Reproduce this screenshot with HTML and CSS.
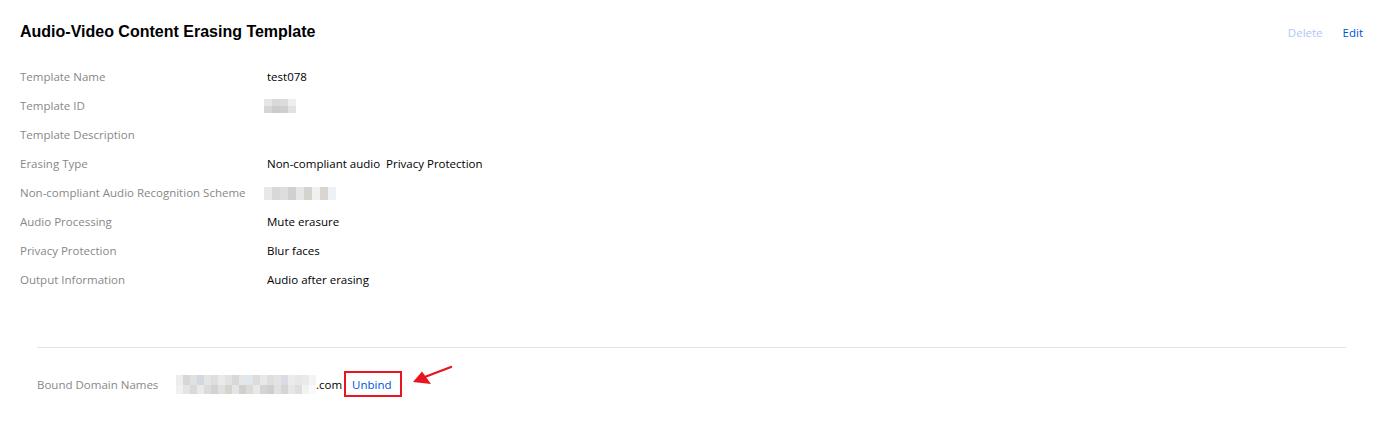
FILE: index.html
```html
<!DOCTYPE html>
<html lang="en">
<head>
<meta charset="utf-8">
<title>Audio-Video Content Erasing Template</title>
<link rel="stylesheet" href="styles.css">
</head>
<body>
<div class="page">
  <div class="header">
    <h2 class="title">Audio-Video Content Erasing Template</h2>
    <div class="actions">
      <a class="link disabled">Delete</a>
      <a class="link">Edit</a>
    </div>
  </div>
  <div class="details">
    <div class="row"><div class="label">Template Name</div><div class="value">test078</div></div>
    <div class="row"><div class="label">Template ID</div><div class="value"><span class="mosaic mosaic-id"></span></div></div>
    <div class="row"><div class="label">Template Description</div><div class="value"></div></div>
    <div class="row"><div class="label">Erasing Type</div><div class="value">Non-compliant audio&nbsp; Privacy Protection</div></div>
    <div class="row"><div class="label">Non-compliant Audio Recognition Scheme</div><div class="value"><span class="mosaic mosaic-scheme"></span></div></div>
    <div class="row"><div class="label">Audio Processing</div><div class="value">Mute erasure</div></div>
    <div class="row"><div class="label">Privacy Protection</div><div class="value">Blur faces</div></div>
    <div class="row"><div class="label">Output Information</div><div class="value">Audio after erasing</div></div>
  </div>
  <div class="bound">
    <div class="bound-row">
      <div class="bound-label">Bound Domain Names</div>
      <div class="bound-value">
        <span class="mosaic mosaic-domain"></span><span class="domain-tail">.com</span>
        <span class="unbind-box"><a class="link">Unbind</a></span>
        <svg class="arrow" width="44" height="24" viewBox="0 0 44 24">
          <path d="M15 12.5 L40 3" stroke="#e8141f" stroke-width="2.4" stroke-linecap="round" fill="none"/>
          <path d="M2 18 L11 7.5 L15 13 L20 20 Z" fill="#e8141f"/>
        </svg>
      </div>
    </div>
  </div>
</div>
</body>
</html>
```
FILE: styles.css
```css
* { box-sizing: border-box; }
body {
  margin: 0;
  background: #fff;
  font-family: "Open Sans", "Noto Sans", "Liberation Sans", sans-serif;
  font-size: 11.5px;
  color: #000;
}
.page {
  padding: 20px 20px 0 20px;
}
.header {
  display: flex;
  justify-content: space-between;
  align-items: center;
  height: 24px;
}
.title {
  margin: 0;
  font-family: "Liberation Sans", Arial, sans-serif;
  font-weight: bold;
  font-size: 16px;
  color: #000;
  line-height: 24px;
}
.actions {
  display: flex;
  gap: 20px;
}
.link {
  color: #0052d9;
  cursor: pointer;
}
.link.disabled {
  color: #b0c6f7;
}
.details {
  margin-top: 18px;
}
.row {
  display: flex;
  align-items: center;
  height: 29px;
}
.label {
  width: 247px;
  color: #888;
}
.value {
  color: #000;
}
.mosaic {
  display: inline-block;
  vertical-align: middle;
}
.mosaic-id {
  width: 32px;
  height: 14px;
  margin-left: -3px;
  background:
    linear-gradient(90deg, #e6e6e6 0 8px, #d9d9d9 8px 16px, #dcdcdc 16px 24px, #eeeeee 24px 32px) top/100% 7px no-repeat,
    linear-gradient(90deg, #d6d6d6 0 8px, #cccccc 8px 16px, #cfcfcf 16px 24px, #e2e2e2 24px 32px) bottom/100% 7px no-repeat;
}
.mosaic-scheme {
  width: 72px;
  height: 13px;
  margin-left: -3px;
  background: linear-gradient(90deg, #e8e8e8 0 8px, #d8d8d8 8px 16px, #dddddd 16px 24px, #d2cfcc 24px 32px, #e6e6e6 32px 40px, #d6d2ce 40px 48px, #f0f0f0 48px 56px, #d9d5d0 56px 64px, #eef2f8 64px 72px);
}
.bound {
  margin: 53px 17px 0 17px;
  border-top: 1px solid #e5e5e5;
  padding-top: 23px;
}
.bound-row {
  display: flex;
  align-items: center;
  height: 26px;
}
.bound-label {
  width: 139px;
  color: #888;
}
.bound-value {
  display: flex;
  align-items: center;
}
.mosaic-domain {
  width: 140px;
  height: 19px;
  background:
    linear-gradient(90deg, #ededed 0 7px, #d6d6d6 7px 14px, #e0e0e0 14px 21px, #d3d8df 21px 28px, #e4e4e4 28px 35px, #dedede 35px 42px, #eaeaea 42px 49px, #e2e2e2 49px 56px, #d8d8d8 56px 63px, #e6e6e6 63px 70px, #e0e6ee 70px 77px, #dcdcdc 77px 84px, #e8e8e8 84px 91px, #dedede 91px 98px, #e3e3e3 98px 105px, #d9dde3 105px 112px, #ececec 112px 119px, #e7e7e7 119px 126px, #eaeaea 126px 133px, #f4f4f4 133px 140px) top/100% 10px no-repeat,
    linear-gradient(90deg, #f0f0f0 0 7px, #e4e4e4 7px 14px, #d9d9d9 14px 21px, #e9e9e9 21px 28px, #dcdcdc 28px 35px, #d2d2d2 35px 42px, #e0e0e0 42px 49px, #d7d3cf 49px 56px, #e5e5e5 56px 63px, #d0d0d0 63px 70px, #dedad6 70px 77px, #e8e8e8 77px 84px, #d4d4d4 84px 91px, #cfcfcf 91px 98px, #e1e1e1 98px 105px, #d5d5d5 105px 112px, #e6e6e6 112px 119px, #dedede 119px 126px, #f2f2f2 126px 133px, #fafafa 133px 140px) bottom/100% 9px no-repeat;
}
.domain-tail {
  color: #000;
}
.unbind-box {
  display: inline-flex;
  align-items: center;
  height: 26px;
  width: 58px;
  margin-left: 2px;
  padding-left: 6px;
  border: 2px solid #e8141f;
}
.arrow {
  margin-left: 9px;
  margin-top: -16px;
}
```
